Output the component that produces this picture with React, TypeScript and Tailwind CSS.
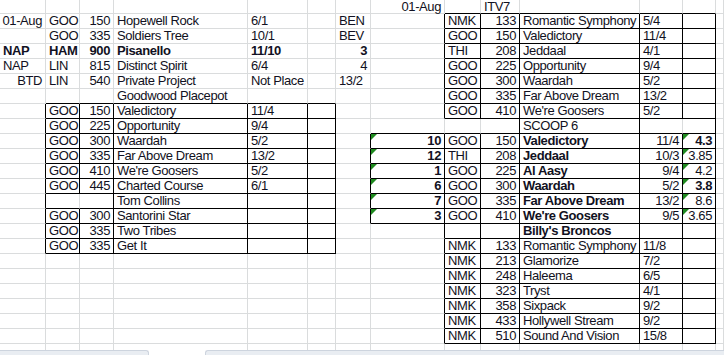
import React from 'react'

// column widths include the 1px right gridline
const colClass = 'grid grid-cols-[46px_34px_34px_134px_60px_28px_35px_74px_36px_39px_120px_43px_33px_1fr]'

const NMK = (n: string, name: string, odds: string) => ['', '', '', '', '', '', '', '', 'NMK', n, name, odds, '', '']

// prefixes: * bold, > right align, ^ green error marker
const rows: string[][] = [
  ['', '', '', '', '', '', '', '>01-Aug', '', 'ITV7', '', '', '', ''],
  ['>01-Aug', 'GOO', '150', 'Hopewell Rock', '6/1', '', 'BEN', '', 'NMK', '133', 'Romantic Symphony', '5/4', '', ''],
  ['', 'GOO', '335', 'Soldiers Tree', '10/1', '', 'BEV', '', 'GOO', '150', 'Valedictory', '11/4', '', ''],
  ['*NAP', '*HAM', '*900', '*Pisanello', '*11/10', '', '*3', '', 'THI', '208', 'Jeddaal', '4/1', '', ''],
  ['NAP', 'LIN', '815', 'Distinct Spirit', '6/4', '', '4', '', 'GOO', '225', 'Opportunity', '9/4', '', ''],
  ['>BTD', 'LIN', '540', 'Private Project', 'Not Place', '', '13/2', '', 'GOO', '300', 'Waardah', '5/2', '', ''],
  ['', '', '', 'Goodwood Placepot', '', '', '', '', 'GOO', '335', 'Far Above Dream', '13/2', '', ''],
  ['', 'GOO', '150', 'Valedictory', '11/4', '', '', '', 'GOO', '410', "We're Goosers", '5/2', '', ''],
  ['', 'GOO', '225', 'Opportunity', '9/4', '', '', '', '', '', 'SCOOP 6', '', '', ''],
  ['', 'GOO', '300', 'Waardah', '5/2', '', '', '^*10', 'GOO', '150', '*Valedictory', '>11/4', '^*4.3', ''],
  ['', 'GOO', '335', 'Far Above Dream', '13/2', '', '', '^*12', 'THI', '208', '*Jeddaal', '>10/3', '^3.85', ''],
  ['', 'GOO', '410', "We're Goosers", '5/2', '', '', '^*1', 'GOO', '225', '*Al Aasy', '>9/4', '^4.2', ''],
  ['', 'GOO', '445', 'Charted Course', '6/1', '', '', '^*6', 'GOO', '300', '*Waardah', '>5/2', '^*3.8', ''],
  ['', '', '', 'Tom Collins', '', '', '', '^*7', 'GOO', '335', '*Far Above Dream', '>13/2', '^8.6', ''],
  ['', 'GOO', '300', 'Santorini Star', '', '', '', '^*3', 'GOO', '410', "*We're Goosers", '>9/5', '^3.65', ''],
  ['', 'GOO', '335', 'Two Tribes', '', '', '', '', '', '', "*Billy's Broncos", '', '', ''],
  ['', 'GOO', '335', 'Get It', '', '', '', '', 'NMK', '133', 'Romantic Symphony', '11/8', '', ''],
  NMK('213', 'Glamorize', '7/2'),
  NMK('248', 'Haleema', '6/5'),
  NMK('323', 'Tryst', '4/1'),
  NMK('358', 'Sixpack', '9/2'),
  NMK('433', 'Hollywell Stream', '9/2'),
  NMK('510', 'Sound And Vision', '15/8'),
  ['', '', '', '', '', '', '', '', '', '', '', '', '', ''],
]

// which sides of a cell carry a black border
const box: Record<string, string> = {}
function rect(r0: number, r1: number, c0: number, c1: number, sides = 'lrtb') {
  for (let r = r0; r <= r1; r++) for (let c = c0; c <= c1; c++) box[`${r},${c}`] = sides
}
rect(7, 16, 1, 5)
rect(13, 13, 1, 1, 'ltb')
rect(13, 13, 2, 2, 'rtb')
rect(1, 7, 8, 12)
rect(8, 8, 8, 8, 'tb')
rect(8, 8, 9, 9, 'rtb')
rect(8, 8, 10, 10)
rect(8, 8, 11, 11, 'ltb')
rect(8, 8, 12, 12, 'rtb')
rect(9, 14, 7, 12)
rect(15, 22, 8, 12)

const has = (r: number, c: number, s: string) => (box[`${r},${c}`] || '').includes(s)

function Cell({ raw, r, c }: { raw: string; r: number; c: number }) {
  let t = raw
  let bold = false
  let right = false
  let tri = false
  while (t && '*>^'.includes(t[0])) {
    if (t[0] === '*') bold = true
    if (t[0] === '>') right = true
    if (t[0] === '^') tri = true
    t = t.slice(1)
  }
  if (/^\d+(\.\d+)?$/.test(t)) right = true

  const rightBlack = has(r, c, 'r') || has(r, c + 1, 'l')
  const bottomBlack = has(r, c, 'b') || has(r + 1, c, 't')

  return (
    <div
      className={`relative flex items-center border-r border-b whitespace-nowrap ${r === 0 ? 'h-[14px]' : 'h-[15px]'} ${
        rightBlack ? 'border-r-black' : 'border-r-[#dadcdd]'
      } ${bottomBlack ? 'border-b-black' : 'border-b-[#dadcdd]'} ${right ? 'justify-end pr-[3px]' : 'justify-start pl-[3px]'} ${
        bold ? 'font-bold' : 'font-normal'
      }`}
    >
      {tri && (
        <svg className="absolute left-0 top-0" width="6" height="6" viewBox="0 0 6 6">
          <polygon points="0,0 6,0 0,6" fill="#1f8a1f" />
        </svg>
      )}
      {t}
    </div>
  )
}

export default function App() {
  return (
    <div className="w-[724px] h-[355px] overflow-hidden bg-white flex flex-col font-['Liberation_Sans',Arial,sans-serif] text-[13px] leading-[14px] tracking-[-0.4px] text-[#111122]">
      {/* Sheet grid */}
      <div className="h-[350px] overflow-hidden">
        <div className={colClass}>
          {rows.map((row, r) => row.map((raw, c) => <Cell key={`${r}-${c}`} raw={raw} r={r} c={c} />))}
        </div>
      </div>

      {/* Sheet tabs / scrollbar strip */}
      <div className="h-[5px] flex bg-white">
        <div className="w-[149px] bg-[#e9edf2] border-t border-r border-[#cdd4de] rounded-tr-[3px]" />
        <div className="w-[56px]" />
        <div className="flex-1 bg-[#e9edf2] border-t border-l border-[#cdd4de] rounded-tl-[3px]" />
      </div>
    </div>
  )
}
